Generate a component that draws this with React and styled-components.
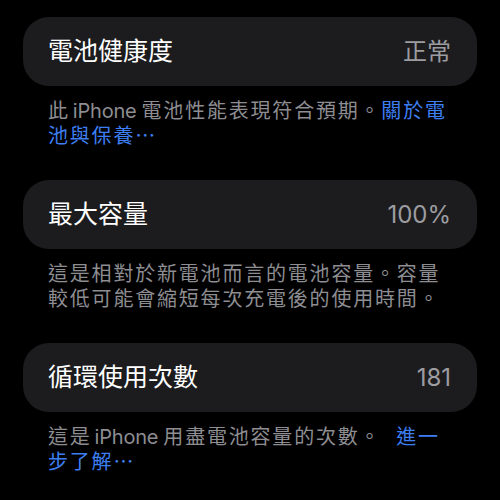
import React from "react";
import styled, { createGlobalStyle } from "styled-components";

const GlobalStyle = createGlobalStyle`
  html, body {
    margin: 0;
    padding: 0;
    background: #000;
  }
  body {
    font-family: "Inter", "Noto Sans CJK TC", sans-serif;
    -webkit-font-smoothing: antialiased;
  }
`;

const sections = [
  {
    title: "電池健康度",
    value: "正常",
    note: ["此", "iPhone", "電池性能表現符合預期。"],
    link: "關於電池與保養⋯",
  },
  {
    title: "最大容量",
    value: "100%",
    note: ["這是相對於新電池而言的電池容量。容量較低可能會縮短每次充電後的使用時間。"],
  },
  {
    title: "循環使用次數",
    value: "181",
    note: ["這是", "iPhone", "用盡電池容量的次數。\u00a0 "],
    link: "進一步了解⋯",
  },
];

export default function App() {
  return (
    <>
      <GlobalStyle />
      <Page>
        {sections.map((s) => (
          <Section key={s.title}>
            <Card>
              <Title>{s.title}</Title>
              <Value>{s.value}</Value>
            </Card>
            <Footer>
              {s.note.map((part, i) =>
                part === "iPhone" ? <Latin key={i}>{part}</Latin> : part
              )}
              {s.link && <Link>{s.link}</Link>}
            </Footer>
          </Section>
        ))}
      </Page>
    </>
  );
}

const Page = styled.div`
  width: 500px;
  height: 500px;
  overflow: hidden;
  box-sizing: border-box;
  padding: 17px 23px 0;
  display: flex;
  flex-direction: column;
  gap: 31.5px;
`;

const Section = styled.section`
  display: flex;
  flex-direction: column;
  gap: 12.5px;
`;

const Card = styled.div`
  height: 69px;
  box-sizing: border-box;
  padding: 0 26px 0 25px;
  background: #1c1c1e;
  border-radius: 26px;
  display: flex;
  align-items: center;
  justify-content: space-between;
`;

const Title = styled.span`
  color: #fff;
  font-size: 25px;
  line-height: 1;
`;

const Value = styled.span`
  color: #9c9ca1;
  font-size: 24px;
  line-height: 1;
`;

const Footer = styled.p`
  margin: 0;
  padding: 0 26px 0 25px;
  color: #8d8d92;
  font-size: 20px;
  line-height: 25px;
  letter-spacing: 1.8px;
`;

const Latin = styled.span`
  letter-spacing: -0.2px;
  margin: 0 5px 0 3px;
`;

const Link = styled.span`
  color: #3d7ff2;
`;
